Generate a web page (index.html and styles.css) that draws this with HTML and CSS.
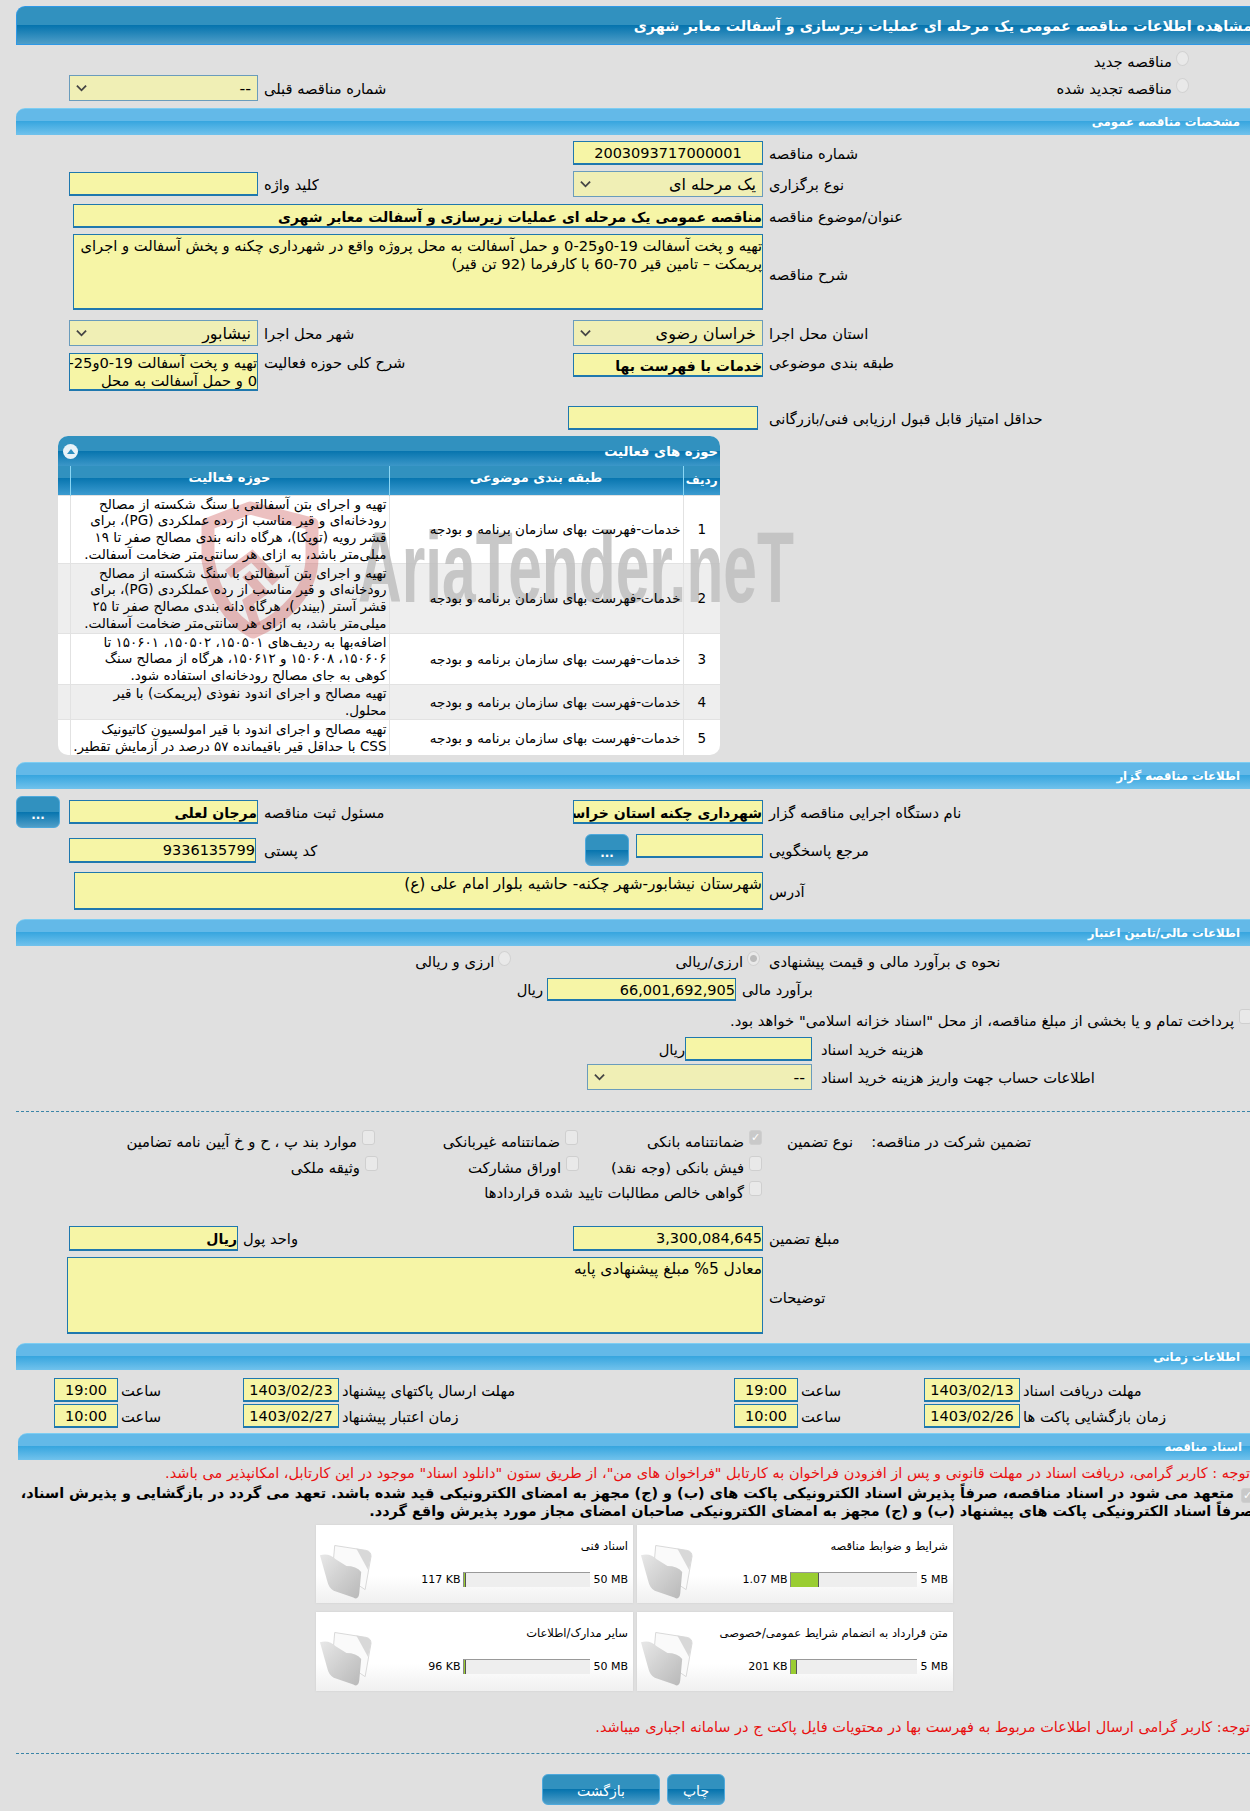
FILE: index.html
```
<!DOCTYPE html>
<html lang="fa">
<head>
<meta charset="utf-8">
<title>مشاهده اطلاعات مناقصه</title>
<link rel="stylesheet" href="styles.css">
</head>
<body>
<div class="page">
  <h1 class="bar title">مشاهده اطلاعات مناقصه عمومی یک مرحله ای عملیات زیرسازی و آسفالت معابر شهری</h1>

  <div class="row r-radio1"><div class="c5 opt-line"><span class="radio"></span><span>مناقصه جدید</span></div></div>
  <div class="row r-radio2">
    <div class="c2 field select"><svg class="chev" viewBox="0 0 12 8"><path d="M1 1.5 6 6.5 11 1.5" /></svg><span>--</span></div>
    <div class="c3 lbl">شماره مناقصه قبلی</div>
    <div class="c5 opt-line"><span class="radio"></span><span>مناقصه تجدید شده</span></div>
  </div>

  <h2 class="bar section s1">مشخصات مناقصه عمومی</h2>

  <div class="row h24 mt6"><div class="c4 field big center">2003093717000001</div><div class="c5 lbl">شماره مناقصه</div></div>
  <div class="row h26 mt6">
    <div class="c2 field h24"></div><div class="c3 lbl">کلید واژه</div>
    <div class="c4 field select"><svg class="chev" viewBox="0 0 12 8"><path d="M1 1.5 6 6.5 11 1.5" /></svg><span>یک مرحله ای</span></div><div class="c5 lbl">نوع برگزاری</div>
  </div>
  <div class="row h24 mt7"><div class="wide field bold">مناقصه عمومی یک مرحله ای عملیات زیرسازی و آسفالت معابر شهری</div><div class="c5 lbl">عنوان/موضوع مناقصه</div></div>
  <div class="row h76 mt6"><div class="wide field area nowrap">تهیه و پخت آسفالت 19-0و25-0 و حمل آسفالت به محل پروژه واقع در شهرداری چکنه و پخش آسفالت و اجرای<br>پریمکت – تامین قیر 70-60 با کارفرما (92 تن قیر)</div><div class="c5 lbl low">شرح مناقصه</div></div>
  <div class="row h26 mt10">
    <div class="c2 field select"><svg class="chev" viewBox="0 0 12 8"><path d="M1 1.5 6 6.5 11 1.5" /></svg><span>نیشابور</span></div><div class="c3 lbl">شهر محل اجرا</div>
    <div class="c4 field select"><svg class="chev" viewBox="0 0 12 8"><path d="M1 1.5 6 6.5 11 1.5" /></svg><span>خراسان رضوی</span></div><div class="c5 lbl">استان محل اجرا</div>
  </div>
  <div class="row h38 mt7 top">
    <div class="c2 field area tight">تهیه و پخت آسفالت 19-0و25-<br>0 و حمل آسفالت به محل</div><div class="c3 lbl">شرح کلی حوزه فعالیت</div>
    <div class="c4 field h24 bold">خدمات با فهرست بها</div><div class="c5 lbl">طبقه بندی موضوعی</div>
  </div>
  <div class="row h24 mt15"><div class="c4 field shift5"></div><div class="c5 lbl">حداقل امتیاز قابل قبول ارزیابی فنی/بازرگانی</div></div>

  <section class="panel">
    <div class="watermark" aria-hidden="true">
      <svg class="wm-logo" viewBox="0 0 120 140"><path class="wm-shield" d="M8 24 L50 8 L112 24 L112 58 C112 90 85 118 53 132 C30 120 14 95 8 60 Z"/><path class="wm-arrow" d="M28 74 L52 56 L76 82 M46 74 L62 92 L48 102 L56 126"/></svg>
      <span class="wm-text">AriaTender.neT</span>
    </div>
    <div class="panel-head">
      <span class="collapse"><i></i></span>
      <span>حوزه های فعالیت</span>
    </div>
    <table class="grid">
      <colgroup><col class="w1"><col class="w2"><col class="w3"><col class="w4"></colgroup>
      <thead><tr><th></th><th>حوزه فعالیت</th><th>طبقه بندی موضوعی</th><th class="rad">ردیف</th></tr></thead>
      <tbody>
        <tr class="h1"><td></td><td class="act">تهیه و اجرای بتن آسفالتی با سنگ شکسته از مصالح<br>رودخانه‌ای و قیر مناسب از رده عملکردی (PG)، برای<br>قشر رویه (توپکا)، هرگاه دانه بندی مصالح صفر تا ۱۹<br>میلی‌متر باشد، به ازای هر سانتی‌متر ضخامت آسفالت.</td><td class="cat">خدمات-فهرست بهای سازمان برنامه و بودجه</td><td class="num">1</td></tr>
        <tr class="h2 alt"><td></td><td class="act">تهیه و اجرای بتن آسفالتی با سنگ شکسته از مصالح<br>رودخانه‌ای و قیر مناسب از رده عملکردی (PG)، برای<br>قشر آستر (بیندر)، هرگاه دانه بندی مصالح صفر تا ۲۵<br>میلی‌متر باشد، به ازای هر سانتی‌متر ضخامت آسفالت.</td><td class="cat">خدمات-فهرست بهای سازمان برنامه و بودجه</td><td class="num">2</td></tr>
        <tr class="h3"><td></td><td class="act">اضافه‌بها به ردیف‌های ۱۵۰۵۰۱، ۱۵۰۵۰۲، ۱۵۰۶۰۱ تا<br>۱۵۰۶۰۶، ۱۵۰۶۰۸ و ۱۵۰۶۱۲، هرگاه از مصالح سنگ<br>کوهی به جای مصالح رودخانه‌ای استفاده شود.</td><td class="cat">خدمات-فهرست بهای سازمان برنامه و بودجه</td><td class="num">3</td></tr>
        <tr class="h4 alt"><td></td><td class="act">تهیه مصالح و اجرای اندود نفوذی (پریمکت) با قیر<br>محلول.</td><td class="cat">خدمات-فهرست بهای سازمان برنامه و بودجه</td><td class="num">4</td></tr>
        <tr class="h5"><td></td><td class="act">تهیه مصالح و اجرای اندود با قیر امولسیون کاتیونیک<br>CSS با حداقل قیر باقیمانده ۵۷ درصد در آزمایش تقطیر.</td><td class="cat">خدمات-فهرست بهای سازمان برنامه و بودجه</td><td class="num">5</td></tr>
      </tbody>
    </table>
  </section>

  <h2 class="bar section s3">اطلاعات مناقصه گزار</h2>
  <div class="row h32 mt7">
    <div class="c1 btn dots">...</div>
    <div class="c2 field h24 bold">مرجان لعلی</div><div class="c3 lbl">مسئول ثبت مناقصه</div>
    <div class="c4 field h24 bold">شهرداری چکنه استان خراسان رضوی</div><div class="c5 lbl">نام دستگاه اجرایی مناقصه گزار</div>
  </div>
  <div class="row h32 mt6">
    <div class="c2 field h25 narrow3 big">9336135799</div><div class="c3 lbl">کد پستی</div>
    <div class="c4 pair"><div class="btn dots">...</div><div class="field h24 w127"></div></div><div class="c5 lbl">مرجع پاسخگویی</div>
  </div>
  <div class="row h38 mt6"><div class="wide field area larger w689">شهرستان نیشابور-شهر چکنه- حاشیه بلوار امام علی (ع)</div><div class="c5 lbl">آدرس</div></div>

  <h2 class="bar section s4">اطلاعات مالی/تامین اعتبار</h2>
  <div class="row h24 mt3">
    <div class="opts">
      <div class="opt-line o1"><span class="radio on"></span><span>ارزی/ریالی</span></div>
      <div class="opt-line"><span class="radio"></span><span>ارزی و ریالی</span></div>
    </div>
    <div class="c5 lbl">نحوه ی برآورد مالی و قیمت پیشنهادی</div>
  </div>
  <div class="line est mt5"><span class="unit">ریال</span><div class="field big">66,001,692,905</div><span class="lbl">برآورد مالی</span></div>
  <div class="opt-line pay"><span class="check"></span><span>پرداخت تمام و یا بخشی از مبلغ مناقصه، از محل "اسناد خزانه اسلامی" خواهد بود.</span></div>
  <div class="line fee"><span class="unit">ریال</span><div class="field"></div><span class="lbl">هزینه خرید اسناد</span></div>
  <div class="line acct"><div class="field select"><svg class="chev" viewBox="0 0 12 8"><path d="M1 1.5 6 6.5 11 1.5" /></svg><span>--</span></div><span class="lbl">اطلاعات حساب جهت واریز هزینه خرید اسناد</span></div>

  <hr class="dash d1">

  <div class="guar">
    <div class="g3 opt-line"><span class="check"></span><span>موارد بند پ ، ح و خ آیین نامه تضامین</span></div>
    <div class="g2 opt-line"><span class="check"></span><span>ضمانتنامه غیربانکی</span></div>
    <div class="g1 opt-line"><span class="check on">✓</span><span>ضمانتنامه بانکی</span></div>
    <div class="gl1">نوع تضمین</div>
    <div class="gl2">تضمین شرکت در مناقصه:</div>
    <div class="g3 opt-line sh3"><span class="check"></span><span>وثیقه ملکی</span></div>
    <div class="g2 opt-line sh1"><span class="check"></span><span>اوراق مشارکت</span></div>
    <div class="g1 opt-line"><span class="check"></span><span>فیش بانکی (وجه نقد)</span></div>
    <div class="g1 opt-line gwide"><span class="check"></span><span>گواهی خالص مطالبات تایید شده قراردادها</span></div>
  </div>

  <div class="row amount">
    <div class="c2 field w169 bold">ریال</div><div class="c3 lbl back21">واحد پول</div>
    <div class="c4 field big">3,300,084,645</div><div class="c5 lbl">مبلغ تضمین</div>
  </div>
  <div class="row h77 mt6"><div class="wide field area larger w696">معادل 5% مبلغ پیشنهادی پایه</div><div class="c5 lbl low">توضیحات</div></div>

  <h2 class="bar section s5">اطلاعات زمانی</h2>
  <div class="dates d-first">
    <div class="field t big">19:00</div><div class="lbl">ساعت</div><div class="field dt big">1403/02/23</div><div class="lbl">مهلت ارسال پاکتهای پیشنهاد</div>
    <div class="field t big">19:00</div><div class="lbl">ساعت</div><div class="field dt big">1403/02/13</div><div class="lbl">مهلت دریافت اسناد</div>
  </div>
  <div class="dates">
    <div class="field t big">10:00</div><div class="lbl">ساعت</div><div class="field dt big">1403/02/27</div><div class="lbl">زمان اعتبار پیشنهاد</div>
    <div class="field t big">10:00</div><div class="lbl">ساعت</div><div class="field dt big">1403/02/26</div><div class="lbl">زمان بازگشایی پاکت ها</div>
  </div>

  <h2 class="bar section s6">اسناد مناقصه</h2>
  <p class="red n1">توجه : کاربر گرامی، دریافت اسناد در مهلت قانونی و پس از افزودن فراخوان به کارتابل "فراخوان های من"، از طریق ستون "دانلود اسناد" موجود در این کارتابل، امکانپذیر می باشد.</p>
  <p class="pledge"><span class="check on">✓</span>متعهد می شود در اسناد مناقصه، صرفاً پذیرش اسناد الکترونیکی پاکت های (ب) و (ج) مجهز به امضای الکترونیکی قید شده باشد. تعهد می گردد در بازگشایی و پذیرش اسناد،<br>صرفاً اسناد الکترونیکی پاکت های پیشنهاد (ب) و (ج) مجهز به امضای الکترونیکی صاحبان امضای مجاز مورد پذیرش واقع گردد.</p>

  <div class="cards">
    <div class="card">
      <svg class="folder" viewBox="0 0 54 60"><use href="#fold"/></svg>
      <div class="card-body"><div class="card-title">اسناد فنی</div>
      <div class="meter"><span>117 KB</span><div class="track"><i style="width:2px"></i></div><span>50 MB</span></div></div>
    </div>
    <div class="card">
      <svg class="folder" viewBox="0 0 54 60"><use href="#fold"/></svg>
      <div class="card-body"><div class="card-title">شرایط و ضوابط مناقصه</div>
      <div class="meter"><span>1.07 MB</span><div class="track"><i style="width:28px"></i></div><span>5 MB</span></div></div>
    </div>
    <div class="card">
      <svg class="folder" viewBox="0 0 54 60"><use href="#fold"/></svg>
      <div class="card-body"><div class="card-title">سایر مدارک/اطلاعات</div>
      <div class="meter"><span>96 KB</span><div class="track"><i style="width:2px"></i></div><span>50 MB</span></div></div>
    </div>
    <div class="card">
      <svg class="folder" viewBox="0 0 54 60"><use href="#fold"/></svg>
      <div class="card-body"><div class="card-title">متن قرارداد به انضمام شرایط عمومی/خصوصی</div>
      <div class="meter"><span>201 KB</span><div class="track"><i style="width:6px"></i></div><span>5 MB</span></div></div>
    </div>
  </div>

  <p class="red n2">توجه: کاربر گرامی ارسال اطلاعات مربوط به فهرست بها در محتویات فایل پاکت ج در سامانه اجباری میباشد.</p>
  <hr class="dash d2">
  <div class="actions"><div class="btn wide-btn">بازگشت</div><div class="btn print">چاپ</div></div>
</div>

<svg class="defs" width="0" height="0">
  <defs>
    <linearGradient id="fg1" x1="0" y1="0" x2="1" y2="1"><stop offset="0" stop-color="#e8e8e8"/><stop offset="1" stop-color="#b8b8b8"/></linearGradient>
    <g id="fold">
      <path d="M16 3 L48 8 Q53 9 53 14 L47 48 L14 26 Z" fill="#fafafa" stroke="#d8d8d8"/>
      <path d="M38 6 L48 8 Q53 9 53 14 L50 28 Z" fill="#d8d8d8"/>
      <path d="M1 13 Q10 10 17 17 L28 24 Q38 24 43 30 L41 52 Q40 59 35 56 L15 49 Q10 47 8 38 Z" fill="url(#fg1)"/>
    </g>
  </defs>
</svg>
</body>
</html>
```
FILE: styles.css
```
* { box-sizing: border-box; }
html, body { margin: 0; padding: 0; background: #e0e0e0; }
body { font: 14.7px "DejaVu Sans", sans-serif; color: #000; }
.page { width: 1250px; height: 1811px; overflow: hidden; padding-top: 6px; position: relative; }
.defs { position: absolute; }

.bar { margin: 0 0 0 16px; width: 1300px; direction: rtl; color: #fff; font-weight: bold; display: flex; align-items: center; border-radius: 9px 0 0 0; }
.title { height: 39px; font-size: 14.3px; padding-right: 64px; margin-bottom: 3px; justify-content: flex-start; white-space: nowrap;
  background: linear-gradient(#3191bf 0 50%, #0674ae 50%, #4f9ec8 100%); border: 1px solid #2e98e6; border-right: 0; }
.section { height: 27px; font-size: 11.7px; padding-right: 76px;
  background: linear-gradient(#63b9e8 0 48%, #38a6df 48%, #71c2ec 100%); border-top: 1px solid #7dcdf2; }
.s1 { margin-top: 7px; }
.s3 { margin-top: 7px; }
.s4 { margin-top: 9px; }
.s5 { margin-top: 9px; }
.s6 { margin-top: 5px; margin-left: 18px; }

.row { display: grid; grid-template-columns: 69px 189px 315px 190px 1fr; align-items: center; }
.top { align-items: start; }
.r-radio1 { height: 27px; }
.r-radio2 { height: 26px; }
.h24 { height: 24px; }
.h25 { height: 25px; }
.h26 { height: 26px; }
.h32 { height: 32px; }
.h38 { height: 38px; }
.h76 { height: 76px; }
.h77 { height: 77px; }
.mt3 { margin-top: 3px; }
.mt5 { margin-top: 5px; }
.mt6 { margin-top: 6px; }
.mt7 { margin-top: 7px; }
.mt10 { margin-top: 10px; }
.mt15 { margin-top: 15px; }

.c1 { grid-column: 1; }
.c2 { grid-column: 2; }
.c3 { grid-column: 3; }
.c4 { grid-column: 4; }
.c5 { grid-column: 5; }
.wide { grid-column: 2 / 5; margin-left: 4px; }
.wide.w689 { margin-left: 5px; }
.wide.w696 { margin-left: -2px; }
.narrow3 { width: 187px; }
.w169 { width: 169px; }
.w127 { width: 127px; }
.shift5 { position: relative; left: -5px; }
.back21 { margin-left: -21px; }

.lbl { direction: rtl; text-align: left; padding-left: 6px; white-space: nowrap; font-size: 14.7px; }
.low { padding-top: 4px; }
.top .lbl { line-height: 20px; }
.field { direction: rtl; text-align: right; height: 100%; background: #f6f5a6; border: 1px solid #1f78ae; border-width: 1px 1px 2px; overflow: hidden; white-space: nowrap; font-size: 14px; line-height: 23px; }
.field.h24 { height: 24px; }
.field.h25 { height: 25px; }
.big { font-size: 14.5px; }
.center { text-align: center; }
.bold { font-weight: bold; font-size: 14px; line-height: 25px; }
.area { white-space: normal; line-height: 18px; padding: 2px 0 0; font-size: 14.7px; }
.nowrap { white-space: nowrap; }
.larger { font-size: 15.4px; }
.tight { white-space: nowrap; line-height: 18px; padding: 0; }
.select { background: #f0efb5; border: 1px solid #6a9cbc; border-width: 1.5px; display: flex; align-items: center; justify-content: space-between; padding: 0 6px; direction: ltr; font-size: 16px; }
.select span { direction: rtl; }
.chev { width: 11px; height: 8px; fill: none; stroke: #444; stroke-width: 2; flex: none; }

.opt-line { display: flex; direction: rtl; align-items: center; white-space: nowrap; font-size: 14.8px; }
.c5.opt-line { padding-right: 61px; }
.radio { width: 13px; height: 15px; border-radius: 50%; background: #e9e9e9; border: 1.5px solid #d2d2d2; flex: none; position: relative; top: -3px; margin-left: 4px; }
.radio.on { background: radial-gradient(circle, #bbb 0 3px, #e9e9e9 4px); }
.check { display: inline-block; width: 13px; height: 15px; border-radius: 3px; background: #e9e9e9; border: 1px solid #cfcfcf; flex: none; position: relative; top: -4px; margin-left: 5px; font-size: 11px; line-height: 13px; text-align: center; color: #fff; }
.check.on { background: #c9c9c9; }

.btn { background: linear-gradient(#3191bf 0 50%, #0674ae 50%, #4f9ec8 100%); border: 1px solid #4ea9dc; border-radius: 6px; color: #fff; text-align: center; }
.dots { width: 44px; height: 32px; font-size: 12px; font-weight: bold; line-height: 36px; }
.c1.btn { margin-left: 16px; }
.pair { display: flex; justify-content: flex-end; align-items: flex-start; gap: 7px; height: 32px; }

.panel { margin: 6px 0 0 58px; width: 662px; position: relative; border-radius: 10px; background: #fff; }
.panel-head { height: 30px; direction: rtl; color: #fff; font-weight: bold; font-size: 13.2px; display: flex; align-items: center; justify-content: space-between; padding: 0 2px 0 5px; border-radius: 10px 10px 0 0; background: linear-gradient(#3191bf 0 50%, #0674ae 50%, #3c97c8 100%); }
.collapse { width: 15px; height: 15px; border-radius: 50%; background: #e8f2f8; display: flex; align-items: center; justify-content: center; order: 2; }
.collapse i { width: 0; height: 0; border: 4px solid transparent; border-bottom: 5px solid #2d8fc0; border-top: 0; }
.grid { width: 100%; border-collapse: collapse; table-layout: fixed; direction: ltr; font-size: 13.5px; }
.w1 { width: 12px; }
.w2 { width: 319px; }
.w3 { width: 294px; }
.w4 { width: 37px; }
.grid thead tr { height: 29px; background: linear-gradient(#3191bf 0 40%, #0674ae 40%, #3c9bd0 100%); }
.grid th { direction: rtl; color: #fff; font-size: 13px; font-weight: bold; border-left: 1px solid #8ad6f4; padding: 0 0 5px; }
.grid th:first-child { border-left: 0; }
.grid td { position: relative; z-index: 2; padding: 0; border-left: 1px solid #e2e2e2; border-top: 1px solid #e2e2e2; direction: rtl; text-align: right; white-space: nowrap; overflow: hidden; vertical-align: middle; }
.grid td:first-child { border-left: 0; }
.grid .rad { font-size: 12px; padding: 0; }
.alt { background: #eee; }
.h1 { height: 68px; }
.h2 { height: 70px; }
.h3 { height: 51px; }
.h4 { height: 35px; }
.h5 { height: 36px; }
.grid .act { line-height: 16.75px; font-size: 13.5px; padding-right: 2px; }
.grid .cat { padding-right: 2px; }
.grid .num { text-align: center; }

.watermark { position: absolute; left: 142px; top: 64px; width: 620px; height: 140px; z-index: 1; pointer-events: none; }
.wm-logo { position: absolute; left: 0; top: 0; width: 120px; height: 140px; }
.wm-shield { fill: none; stroke: rgba(205, 90, 90, .38); stroke-width: 13; stroke-linejoin: round; }
.wm-arrow { fill: none; stroke: rgba(205, 90, 90, .38); stroke-width: 10; }
.wm-text { position: absolute; left: 158px; top: 17px; font: bold 100px/1 "Liberation Sans", sans-serif; color: rgba(190, 190, 190, .85); transform: scaleX(.605); transform-origin: left top; white-space: nowrap; }

.opts { grid-column: 3 / 5; display: flex; direction: rtl; padding-right: 3px; }
.o1 { margin-left: 164px; }
.line { display: flex; align-items: center; }
.unit { direction: rtl; text-align: right; }
.est { height: 23px; padding-left: 518px; }
.est .unit { width: 25px; margin-right: 4px; }
.est .field { width: 189px; height: 23px; }
.pay { height: 22px; margin-top: 8px; margin-right: -2px; }
.fee { height: 24px; margin-top: 6px; padding-left: 659px; }
.fee .unit { width: 26px; }
.fee .field { width: 127px; height: 24px; }
.fee .lbl, .acct .lbl { padding-left: 9px; }
.acct { height: 26px; margin-top: 3px; padding-left: 587px; }
.acct .field { width: 225px; height: 26px; }

.dash { border: 0; border-top: 1px dashed #3a85a8; margin: 0 0 0 16px; height: 0; }
.d1 { margin-top: 21px; }
.d2 { margin-top: 17px; }

.guar { margin-top: 17px; display: grid; grid-template-columns: 375px 203px 184px 91px 178px; grid-template-rows: 25px 26px 25px; align-items: center; direction: ltr; }
.g1 { grid-column: 3; }
.g2 { grid-column: 2; }
.g3 { grid-column: 1; }
.gl1 { grid-column: 4; grid-row: 1; direction: rtl; text-align: right; }
.gl2 { grid-column: 5; grid-row: 1; direction: rtl; text-align: right; }
.sh1 { margin-right: -1px; }
.sh3 { margin-right: -3px; }
.gwide { grid-column: 1 / 4; grid-row: 3; }
.guar .opt-line { height: 25px; }

.amount { height: 25px; margin-top: 21px; }
.d-first { margin-top: 8px; }
.dates { display: grid; grid-template-columns: 54px 64px 125px 96px 395px 64px 126px 96px 1fr; height: 24px; margin-bottom: 2px; align-items: center; }
.dates > :first-child { grid-column: 2; }
.dates .lbl { padding-left: 3px; }
.t, .dt { text-align: center; }

.red { color: #e81010; direction: rtl; margin: 0; white-space: nowrap; font-size: 14.5px; }
.n1 { margin-top: 3px; height: 21px; line-height: 21px; }
.pledge { direction: rtl; margin: 0 -4px 0 0; font-weight: bold; font-size: 14.4px; line-height: 18px; white-space: nowrap; }
.pledge .check { top: 1px; margin-left: 7px; }

.cards { margin: 5px 0 0 316px; display: grid; grid-template-columns: 317px 316px; grid-template-rows: 78px 79px; column-gap: 4px; row-gap: 9px; }
.card { background: linear-gradient(#fff 0 65%, #f0f0f0 100%); box-shadow: 0 0 2px #ccc; display: flex; align-items: flex-start; padding: 17px 4px 0 3px; }
.folder { width: 53px; height: 60px; flex: none; }
.card-body { flex: 1; margin-top: -4px; }
.card-title { direction: rtl; text-align: right; font-size: 11.5px; height: 34px; white-space: nowrap; line-height: 16px; padding-right: 1px; }
.meter { display: flex; justify-content: flex-end; align-items: center; font-size: 11px; gap: 3px; padding-right: 1px; }
.track { width: 127px; height: 15px; background: #eee; border-top: 1px solid #999; border-left: 1px solid #888; }
.track i { display: block; height: 100%; background: #9acd32; border-right: 1px solid #555; }

.n2 { margin-top: 27px; height: 18px; line-height: 18px; }
.actions { margin: 20px 0 0 542px; display: flex; gap: 7px; height: 31px; }
.actions .btn { font-size: 14px; line-height: 33px; font-weight: normal; direction: rtl; }
.wide-btn { width: 118px; }
.print { width: 58px; }
```
